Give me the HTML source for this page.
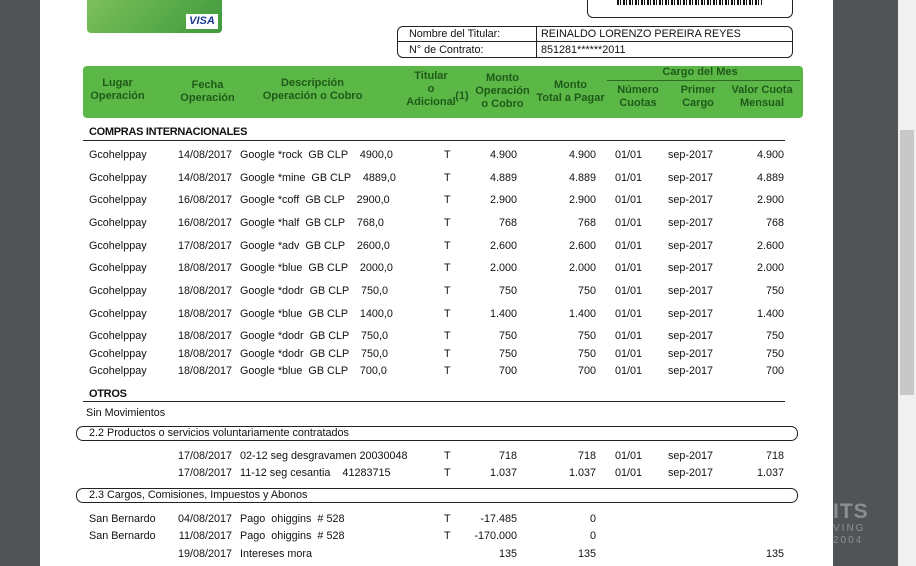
<!DOCTYPE html>
<html><head><meta charset="utf-8"><style>
*{margin:0;padding:0;box-sizing:border-box}
body{width:916px;height:566px;overflow:hidden;background:#505456;position:relative;font-family:"Liberation Sans",sans-serif;font-size:10.8px;color:#111}
.page{position:absolute;left:40px;top:0;width:793px;height:566px;background:#fff}
.sb{position:absolute;left:898px;top:0;width:18px;height:566px;background:#f0f0f0}
.thumb{position:absolute;left:900px;top:130px;width:14px;height:265px;background:#c8c8c8}
.a{position:absolute}
.r{position:absolute;left:0;width:916px;height:13px}
.r span{position:absolute;white-space:pre;top:0}
.c1{left:89px}.c2{right:684px}.c3{left:240px}.c4{left:444px}.c5{right:399px}.c6{right:320px}.c7{left:615px}.c8{left:668px}.c9{right:132px}
.hd{position:absolute;color:#1f5a1a;font-weight:bold;font-size:11px;text-align:center;line-height:13px}
.box{position:absolute;border:1px solid #222;border-radius:6px}
</style></head><body>
<div class="page"></div>
<div class="sb"></div><div class="thumb"></div>
<div class="a" style="left:87px;top:0;width:135px;height:33px;background:linear-gradient(135deg,#7cc05a,#3e9a3c);border-radius:0 0 4px 4px"></div>
<div class="a" style="left:186px;top:14px;width:32px;height:15px;background:#fff;color:#1a3b8f;font-weight:bold;font-style:italic;font-size:11px;text-align:center;line-height:15px">VISA</div>
<div class="a" style="left:587px;top:-8px;width:206px;height:26px;border:1px solid #222;border-radius:6px"></div>
<div class="a" style="left:617px;top:0;width:145px;height:5px;background:repeating-linear-gradient(90deg,#111 0 2px,#fff 2px 3px,#111 3px 4px,#fff 4px 6px)"></div>
<div class="box" style="left:397px;top:26px;width:396px;height:32px"></div>
<div class="a" style="left:397px;top:41px;width:396px;height:1px;background:#222"></div>
<div class="a" style="left:536px;top:26px;width:1px;height:32px;background:#222"></div>
<div class="a" style="left:409px;top:28px">Nombre del Titular:</div>
<div class="a" style="left:409px;top:44px">N° de Contrato:</div>
<div class="a" style="left:541px;top:28px">REINALDO LORENZO PEREIRA REYES</div>
<div class="a" style="left:541px;top:44px">851281******2011</div>
<div class="a" style="left:83px;top:66px;width:720px;height:52px;background:#5cb846;border-radius:4px"></div>
<div class="hd" style="left:80px;top:77px;width:75px">Lugar<br>Operación</div>
<div class="hd" style="left:170px;top:79px;width:75px">Fecha<br>Operación</div>
<div class="hd" style="left:255px;top:77px;width:115px">Descripción<br>Operación o Cobro</div>
<div class="hd" style="left:402px;top:70px;width:58px">Titular<br>o<br>Adicional</div>
<div class="hd" style="left:452px;top:90px;width:20px">(1)</div>
<div class="hd" style="left:470px;top:72px;width:65px">Monto<br>Operación<br>o Cobro</div>
<div class="hd" style="left:533px;top:79px;width:75px">Monto<br>Total a Pagar</div>
<div class="hd" style="left:640px;top:66px;width:120px">Cargo del Mes</div>
<div class="a" style="left:607px;top:80px;width:193px;height:1px;background:#2e6a26"></div>
<div class="hd" style="left:608px;top:84px;width:60px">Número<br>Cuotas</div>
<div class="hd" style="left:668px;top:84px;width:60px">Primer<br>Cargo</div>
<div class="hd" style="left:728px;top:84px;width:68px">Valor Cuota<br>Mensual</div>
<div class="a" style="left:89px;top:126px;font-weight:bold;font-size:11px;letter-spacing:-0.3px">COMPRAS INTERNACIONALES</div>
<div class="a" style="left:83px;top:140px;width:702px;height:1px;background:#222"></div>

<div class="r" style="top:149px"><span class="c1">Gcohelppay</span><span class="c2">14/08/2017</span><span class="c3">Google *rock  GB CLP    4900,0</span><span class="c4">T</span><span class="c5">4.900</span><span class="c6">4.900</span><span class="c7">01/01</span><span class="c8">sep-2017</span><span class="c9">4.900</span></div>
<div class="r" style="top:172px"><span class="c1">Gcohelppay</span><span class="c2">14/08/2017</span><span class="c3">Google *mine  GB CLP    4889,0</span><span class="c4">T</span><span class="c5">4.889</span><span class="c6">4.889</span><span class="c7">01/01</span><span class="c8">sep-2017</span><span class="c9">4.889</span></div>
<div class="r" style="top:194px"><span class="c1">Gcohelppay</span><span class="c2">16/08/2017</span><span class="c3">Google *coff  GB CLP    2900,0</span><span class="c4">T</span><span class="c5">2.900</span><span class="c6">2.900</span><span class="c7">01/01</span><span class="c8">sep-2017</span><span class="c9">2.900</span></div>
<div class="r" style="top:217px"><span class="c1">Gcohelppay</span><span class="c2">16/08/2017</span><span class="c3">Google *half  GB CLP    768,0</span><span class="c4">T</span><span class="c5">768</span><span class="c6">768</span><span class="c7">01/01</span><span class="c8">sep-2017</span><span class="c9">768</span></div>
<div class="r" style="top:240px"><span class="c1">Gcohelppay</span><span class="c2">17/08/2017</span><span class="c3">Google *adv  GB CLP    2600,0</span><span class="c4">T</span><span class="c5">2.600</span><span class="c6">2.600</span><span class="c7">01/01</span><span class="c8">sep-2017</span><span class="c9">2.600</span></div>
<div class="r" style="top:262px"><span class="c1">Gcohelppay</span><span class="c2">18/08/2017</span><span class="c3">Google *blue  GB CLP    2000,0</span><span class="c4">T</span><span class="c5">2.000</span><span class="c6">2.000</span><span class="c7">01/01</span><span class="c8">sep-2017</span><span class="c9">2.000</span></div>
<div class="r" style="top:285px"><span class="c1">Gcohelppay</span><span class="c2">18/08/2017</span><span class="c3">Google *dodr  GB CLP    750,0</span><span class="c4">T</span><span class="c5">750</span><span class="c6">750</span><span class="c7">01/01</span><span class="c8">sep-2017</span><span class="c9">750</span></div>
<div class="r" style="top:308px"><span class="c1">Gcohelppay</span><span class="c2">18/08/2017</span><span class="c3">Google *blue  GB CLP    1400,0</span><span class="c4">T</span><span class="c5">1.400</span><span class="c6">1.400</span><span class="c7">01/01</span><span class="c8">sep-2017</span><span class="c9">1.400</span></div>
<div class="r" style="top:330px"><span class="c1">Gcohelppay</span><span class="c2">18/08/2017</span><span class="c3">Google *dodr  GB CLP    750,0</span><span class="c4">T</span><span class="c5">750</span><span class="c6">750</span><span class="c7">01/01</span><span class="c8">sep-2017</span><span class="c9">750</span></div>
<div class="r" style="top:348px"><span class="c1">Gcohelppay</span><span class="c2">18/08/2017</span><span class="c3">Google *dodr  GB CLP    750,0</span><span class="c4">T</span><span class="c5">750</span><span class="c6">750</span><span class="c7">01/01</span><span class="c8">sep-2017</span><span class="c9">750</span></div>
<div class="r" style="top:365px"><span class="c1">Gcohelppay</span><span class="c2">18/08/2017</span><span class="c3">Google *blue  GB CLP    700,0</span><span class="c4">T</span><span class="c5">700</span><span class="c6">700</span><span class="c7">01/01</span><span class="c8">sep-2017</span><span class="c9">700</span></div>

<div class="a" style="left:89px;top:388px;font-weight:bold;font-size:11px;letter-spacing:-0.3px">OTROS</div>
<div class="a" style="left:83px;top:401px;width:702px;height:1px;background:#222"></div>
<div class="a" style="left:86px;top:407px">Sin Movimientos</div>
<div class="box" style="left:76px;top:426px;width:722px;height:15px;border-radius:7px"></div>
<div class="a" style="left:89px;top:427px">2.2 Productos o servicios voluntariamente contratados</div>
<div class="r" style="top:450px"><span class="c2">17/08/2017</span><span class="c3">02-12 seg desgravamen 20030048</span><span class="c4">T</span><span class="c5">718</span><span class="c6">718</span><span class="c7">01/01</span><span class="c8">sep-2017</span><span class="c9">718</span></div>
<div class="r" style="top:467px"><span class="c2">17/08/2017</span><span class="c3">11-12 seg cesantia    41283715</span><span class="c4">T</span><span class="c5">1.037</span><span class="c6">1.037</span><span class="c7">01/01</span><span class="c8">sep-2017</span><span class="c9">1.037</span></div>
<div class="box" style="left:76px;top:488px;width:722px;height:15px;border-radius:7px"></div>
<div class="a" style="left:89px;top:489px">2.3 Cargos, Comisiones, Impuestos y Abonos</div>
<div class="r" style="top:513px"><span class="c1">San Bernardo</span><span class="c2">04/08/2017</span><span class="c3">Pago  ohiggins  # 528</span><span class="c4">T</span><span class="c5">-17.485</span><span class="c6">0</span></div>
<div class="r" style="top:530px"><span class="c1">San Bernardo</span><span class="c2">11/08/2017</span><span class="c3">Pago  ohiggins  # 528</span><span class="c4">T</span><span class="c5">-170.000</span><span class="c6">0</span></div>
<div class="r" style="top:548px"><span class="c2">19/08/2017</span><span class="c3">Intereses mora</span><span class="c5">135</span><span class="c6">135</span><span class="c9">135</span></div>

<div class="a" style="left:833px;top:500px;color:#8a8e90;font-weight:bold;font-size:21px;letter-spacing:1px">ITS</div>
<div class="a" style="left:833px;top:523px;color:#8a8e90;font-size:10px;letter-spacing:2px">VING</div>
<div class="a" style="left:833px;top:535px;color:#8a8e90;font-size:10px;letter-spacing:2px">2004</div>
</body></html>
